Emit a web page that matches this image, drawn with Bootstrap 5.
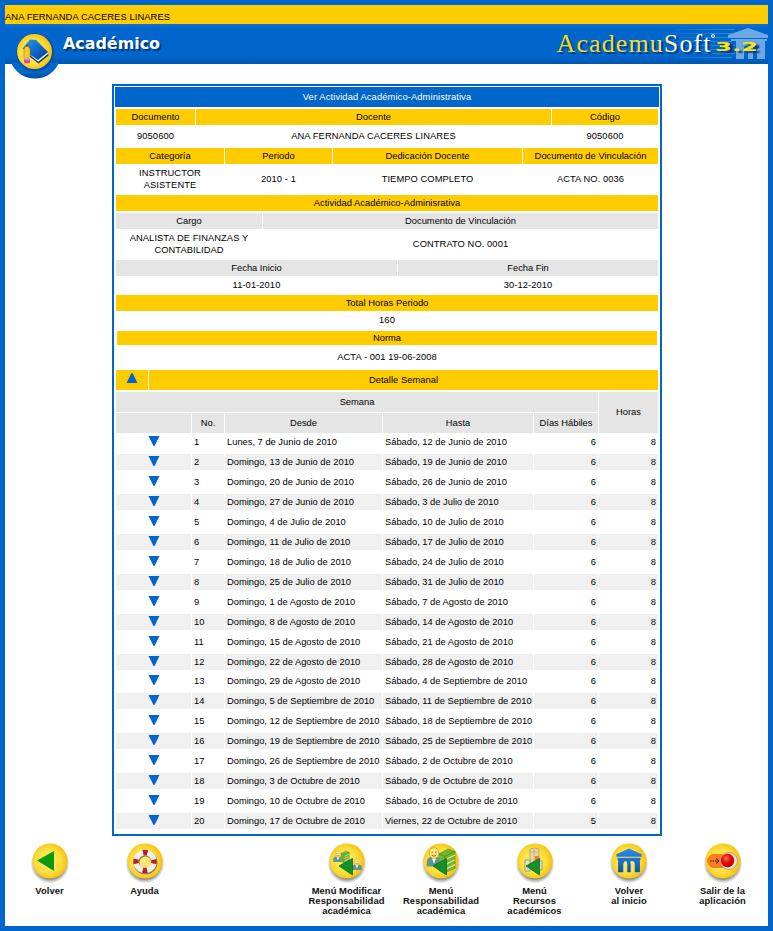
<!DOCTYPE html>
<html lang="es">
<head>
<meta charset="utf-8">
<meta name="viewport" content="width=device-width, initial-scale=1">
<title>Académico - AcademuSoft 3.2</title>
<link href="https://cdn.jsdelivr.net/npm/bootstrap@5.3.0/dist/css/bootstrap.min.css" rel="stylesheet">
<style>
  body { font-family: "Liberation Sans", Arial, sans-serif; font-size: 9.33px; line-height: 12px; color: #000; background: #fff; }
  .page { width: 773px; height: 931px; border: 5px solid #06c; }
  .userbar { height: 19px; background: #fc0; padding-top: 6px; letter-spacing: .1px; flex: none; }
  .banner { height: 40px; background: linear-gradient(#1470d0 0, #06c 5px, #06c 32px, #0057b0 40px); flex: none; }
  .banner svg { top: 0; left: 0; }
  .inked { text-shadow: 2px 1.5px 1px rgba(0, 40, 95, .75); }
  .sheet { width: 550px; height: 752px; margin-top: 20px; margin-left: 107px; border: 2px solid #06c; padding: 1px; flex: none; }
  .title { height: 20px; margin-bottom: 2px; background: #06c; color: #fff; letter-spacing: .12px; }
  .cells { display: grid; column-gap: 1px; margin: 0 1px; }
  .cells > div { display: flex; align-items: center; justify-content: center; text-align: center; }
  .vals > div { padding-bottom: 2px; letter-spacing: .08px; }
  .gold > div { background: #fc0; letter-spacing: .04px; }
  .grey > div { background: #e5e5e5; }
  .h14 { height: 14px; }
  .h16 { height: 16px; }
  .h19 { height: 19px; }
  .h20 { height: 20px; }
  .h23 { height: 23px; }
  .h25 { height: 25px; }
  .h31 { height: 31px; }
  .spaced { margin-top: 2px; }
  .c3 { grid-template-columns: 79px 355px 106px; }
  .c4 { grid-template-columns: 108px 107px 189px 135px; }
  .c2a { grid-template-columns: 146px 395px; }
  .c2b { grid-template-columns: 281px 260px; }
  .c2c { grid-template-columns: 32px 509px; }
  .c1 { grid-template-columns: 542px; }
  .inset { grid-template-columns: 540px; margin: 0 2px; }
  .wk { grid-template-columns: 75px 32px 157px 150px 64px 59px; }
  .wkhead { grid-template-rows: 20px 20px; row-gap: 1px; height: 41px; margin-top: 2px; margin-bottom: -1px; }
  .span5 { grid-column: 1 / 6; }
  .tall { grid-column: 6; grid-row: 1 / 3; }
  .wkhead > .tall { padding-bottom: 2px; }
  .wkrow { height: 20px; padding: 2px 0; white-space: nowrap; }
  .wkrow.short { height: 19px; padding: 1px 0 2px; }
  .wkrow > .l { justify-content: flex-start; padding-left: 2px; }
  .wkrow > .r { justify-content: flex-end; padding-right: 2px; }
  .wkrow.alt > div { background: #f0f0f0; }
  .tools { display: grid; grid-template-columns: 89px 101px 104px 95px 94px 93px 96px 91px; margin-top: 6px; }
  .tool { font-size: 9.4px; font-weight: bold; line-height: 10px; letter-spacing: .06px; text-align: center; color: #111; text-decoration: none; }
  .tool svg { display: block; margin: 0 auto 1px; }
  .tool .cap { padding-top: 1px; }
</style>
<script src="https://cdn.jsdelivr.net/npm/bootstrap@5.3.0/dist/js/bootstrap.bundle.min.js"></script>
</head>
<body>
<svg width="0" height="0" class="position-absolute">
  <defs>
    <radialGradient id="sun" cx=".45" cy=".5" r=".6"><stop offset="0" stop-color="#ffed80"/><stop offset=".6" stop-color="#fddd3a"/><stop offset="1" stop-color="#f2b800"/></radialGradient>
    <radialGradient id="ball" cx=".4" cy=".35" r=".65"><stop offset="0" stop-color="#ff6a50"/><stop offset=".5" stop-color="#e80c0c"/><stop offset="1" stop-color="#b80000"/></radialGradient>
    <radialGradient id="shade"><stop offset=".75" stop-color="#555" stop-opacity=".75"/><stop offset="1" stop-color="#777" stop-opacity="0"/></radialGradient>
    <linearGradient id="book" x1="0" y1="0" x2="1" y2="1"><stop offset="0" stop-color="#1fa0f4"/><stop offset="1" stop-color="#0038a0"/></linearGradient>
    <linearGradient id="arch" gradientUnits="userSpaceOnUse" x1="0" y1="-12" x2="0" y2="13"><stop offset="0" stop-color="#2a8cf0"/><stop offset="1" stop-color="#0a56a8"/></linearGradient>
    <g id="disc"><circle cx="20" cy="22" r="19.5" fill="url(#shade)"/><circle cx="20" cy="19" r="17.6" fill="url(#sun)"/></g>
    <g id="person"><path d="M-6 10v-3q0-4 4-4h4q4 0 4 4v3z" fill="#4687a5"/><path d="M-2 3L0 8l2-5z" fill="#fff"/><circle r="4" fill="#ffe985" stroke="#c99a2c" stroke-width=".6"/><path d="M-1.5-1v1M1.5-1v1M-2 1.5q2 2 4 0" stroke="#6c4a10" stroke-width=".7" fill="none"/></g>
    <g id="books"><path d="M0 4L8 0l6 2v14l-9 4-5-2z" fill="#5fae2c" stroke="#3a8a18" stroke-width=".5"/><path d="M0 4l5 2 9-4M5 6v14" fill="none" stroke="#2c7c12" stroke-width=".7"/><path d="M5.500 9l8.500-4M5.500 13l8.500-4M5.500 17l8.500-4" stroke="#d8e9a8" stroke-width="1"/></g>
    <g id="portal"><path d="M-11-6L0-12 11-6v2.500h-22z"/><path d="M-10-2.500H10V0H9.500V13H5V4q-.3-3-2.500-3T1.500 4v9h-3V4q0-3-1.500-3T-5 4v9h-4.500V0h-.5z"/></g>
    <path id="back" d="M12 24L25.500 16.500V33z" fill="#12902a" stroke="#0a6a1a" stroke-width=".8"/>
  </defs>
</svg>

<div class="page d-flex flex-column overflow-hidden">
  <div class="userbar">ANA FERNANDA CACERES LINARES</div>
  <header class="banner position-relative">
    <svg class="position-absolute" width="763" height="58" viewBox="5 24 763 58">
      <defs>
        <linearGradient id="dip" x1="0" y1="0" x2="0" y2="1"><stop offset=".6" stop-color="#06c"/><stop offset="1" stop-color="#00489a"/></linearGradient>
        <linearGradient id="gt" gradientUnits="userSpaceOnUse" x1="556" y1="0" x2="715" y2="0"><stop offset="0" stop-color="#f8d818"/><stop offset=".6" stop-color="#f0dc40"/><stop offset=".8" stop-color="#fff"/></linearGradient>
        <linearGradient id="fade"><stop offset="0" stop-color="#5ba0e0" stop-opacity="0"/><stop offset="1" stop-color="#5ba0e0"/></linearGradient>
      </defs>
      <path d="M11 62.500H59A26 26 0 0 1 11 62.500z" fill="url(#dip)"/>
      <circle cx="35" cy="52.500" r="19" fill="#0053ac"/>
      <circle cx="34.500" cy="51.500" r="17.500" fill="url(#sun)"/>
      <path d="M24 52l14.500 11.500 10-8-.5-3-10 8L25 49z" fill="#06307a"/>
      <path d="M26 52l12.300 9.800L48 54v-1.500L38 60z" fill="#fff"/>
      <path d="M22.500 48.500L30 39.500l6 .5 12 12-10 8z" fill="url(#book)"/>
      <path d="M24 49L27 44.500 30 49v9h-6z" fill="#ffc928" stroke="#a86b00" stroke-width=".5"/><path d="M26 46l1-1.500L28 46v.5h-2z" fill="#222"/><path d="M24 57.500h6v2h-6z" fill="#bbb"/><path d="M24 59.500h6v3q-3 1.500-6 0z" fill="#e83cc0"/>
      <text class="inked" x="63" y="49.200" font-family="'DejaVu Sans',Verdana,sans-serif" font-weight="bold" font-size="16" textLength="97" lengthAdjust="spacingAndGlyphs" fill="#fff">Académico</text>
      <path d="M675 29h60v1h-60zM670 33h65v1h-65zM680 37h52v1h-52zM660 41h72v1h-72zM670 45h65v1h-65zM680 49h55v1h-55zM670 53h65v1h-65zM680 57h52v1h-52z" fill="url(#fade)" opacity=".6"/>
      <path d="M728 35l20-7 20 7v3h-40zM731 39h36v2h-2v18h-8V47q-1.500-3-4 0v12h-5V47q-2.500-3-4 0v12h-8V41h-5z" fill="#6ca9e4"/>
      <text class="inked" x="556.500" y="52" font-family="'Liberation Serif',serif" font-size="26" textLength="154" lengthAdjust="spacing" fill="url(#gt)">AcademuSoft</text>
      <circle cx="713" cy="36" r="1.500" fill="none" stroke="#fff"/>
      <text class="inked" x="715" y="51" font-family="'DejaVu Sans',sans-serif" font-weight="bold" font-size="12.500" textLength="43" lengthAdjust="spacingAndGlyphs" fill="#ffe600">3.2</text>
    </svg>
  </header>

  <main class="sheet">
    <div class="title d-flex align-items-center justify-content-center">Ver Actividad Académico-Administrativa</div>
    <div class="cells gold h16 c3"><div>Documento</div><div>Docente</div><div>Código</div></div>
    <div class="cells vals h23 c3"><div>9050600</div><div>ANA FERNANDA CACERES LINARES</div><div>9050600</div></div>
    <div class="cells gold h16 c4"><div>Categoría</div><div>Periodo</div><div>Dedicación Docente</div><div>Documento de Vinculación</div></div>
    <div class="cells vals h31 c4"><div>INSTRUCTOR<br>ASISTENTE</div><div>2010 - 1</div><div>TIEMPO COMPLETO</div><div>ACTA NO. 0036</div></div>
    <div class="cells gold h16 c1"><div>Actividad Académico-Adminisrativa</div></div>
    <div class="cells grey h16 c2a spaced"><div>Cargo</div><div>Documento de Vinculación</div></div>
    <div class="cells vals h31 c2a"><div>ANALISTA DE FINANZAS Y<br>CONTABILIDAD</div><div>CONTRATO NO. 0001</div></div>
    <div class="cells grey h16 c2b"><div>Fecha Inicio</div><div>Fecha Fin</div></div>
    <div class="cells vals h19 c2b"><div>11-01-2010</div><div>30-12-2010</div></div>
    <div class="cells gold h16 c1"><div>Total Horas Periodo</div></div>
    <div class="cells vals h20 c1"><div>160</div></div>
    <div class="cells gold h14 inset"><div>Norma</div></div>
    <div class="cells vals h25 c1"><div>ACTA - 001 19-06-2008</div></div>
    <div class="cells gold h20 c2c"><div><svg width="12" height="14" viewBox="0 0 12 14"><path d="M5.500 0h1L11.500 10H.5z" fill="#06c"/></svg></div><div>Detalle Semanal</div></div>
    <div class="cells grey wk wkhead"><div class="span5">Semana</div><div class="tall">Horas</div><div></div><div>No.</div><div>Desde</div><div>Hasta</div><div>Días Hábiles</div></div>
    <div id="weeks"></div>
  </main>

  <nav class="tools">
    <a class="tool"><svg width="40" height="42"><use href="#disc"/><path d="M7 18.500L24 9v20z" fill="#0b9a0b"/></svg><div class="cap">Volver</div></a>
    <a class="tool"><svg width="40" height="42"><use href="#disc"/><circle cx="20.500" cy="20.500" r="9" fill="none" stroke="#8a7a50" stroke-width="6"/><circle cx="20" cy="19.500" r="9" fill="none" stroke="#eee" stroke-width="5.500"/><circle cx="20" cy="19.500" r="9" fill="none" stroke="#b8202a" stroke-width="5.500" stroke-dasharray="4.500 9.637" stroke-dashoffset="2.250"/></svg><div class="cap">Ayuda</div></a>
    <span></span>
    <a class="tool"><svg width="40" height="42"><use href="#disc"/><g opacity=".85"><g transform="translate(11 12) scale(.8)"><use href="#person"/></g><g transform="translate(14 9) scale(.6)"><use href="#books"/></g><g transform="translate(30 20) scale(.8)"><use href="#person"/></g></g><use href="#back"/></svg><div class="cap">Menú Modificar<br>Responsabilidad<br>académica</div></a>
    <a class="tool"><svg width="40" height="42"><use href="#disc"/><g opacity=".85"><g transform="translate(13 11) scale(1.200 1.350)"><use href="#person"/></g><g transform="translate(18 7) scale(1.150 1.200)"><use href="#books"/></g></g><use href="#back"/></svg><div class="cap">Menú<br>Responsabilidad<br>académica</div></a>
    <a class="tool"><svg width="40" height="42"><use href="#disc"/><path d="M15 7l5-1 4 1v20h-9z" fill="#e8d99a" stroke="#a8966a" stroke-width=".7"/><path d="M15 10h8M19 7v15" stroke="#b8a67a" stroke-width=".7"/><path d="M10 18h5v11h-5zM23 19h4v9h-4z" fill="#e9e3c4" stroke="#7d8578" stroke-width=".7"/><path d="M20 14h4v4h-4z" fill="#ef7a38"/><use href="#back" x="-1"/></svg><div class="cap">Menú<br>Recursos<br>académicos</div></a>
    <a class="tool"><svg width="40" height="42"><use href="#disc"/><g transform="translate(20 18)" fill="url(#arch)"><use href="#portal" transform="scale(1.150 .95)"/></g></svg><div class="cap">Volver<br>al inicio</div></a>
    <a class="tool"><svg width="40" height="42"><use href="#disc"/><path d="M11 12.500h14v13H11a6.500 6.500 0 0 1 0-13z" fill="#ff7b20" stroke="#e55c10" stroke-width=".6"/><circle cx="26" cy="19" r="8.500" fill="#e5dfcd" stroke="#a99a74" stroke-width=".8"/><circle cx="24.500" cy="18.500" r="6.700" fill="url(#ball)"/><path d="M7 19h8" stroke="#220" stroke-dasharray="1.500 1"/><path d="M13 16.500l3 2.500-3 2.500" stroke="#220" fill="none"/></svg><div class="cap">Salir de la<br>aplicación</div></a>
  </nav>
</div>
<script>
  const weeks = [
    ["Lunes, 7 de Junio", "Sábado, 12 de Junio"], ["Domingo, 13 de Junio", "Sábado, 19 de Junio"],
    ["Domingo, 20 de Junio", "Sábado, 26 de Junio"], ["Domingo, 27 de Junio", "Sábado, 3 de Julio"],
    ["Domingo, 4 de Julio", "Sábado, 10 de Julio"], ["Domingo, 11 de Julio", "Sábado, 17 de Julio"],
    ["Domingo, 18 de Julio", "Sábado, 24 de Julio"], ["Domingo, 25 de Julio", "Sábado, 31 de Julio"],
    ["Domingo, 1 de Agosto", "Sábado, 7 de Agosto"], ["Domingo, 8 de Agosto", "Sábado, 14 de Agosto"],
    ["Domingo, 15 de Agosto", "Sábado, 21 de Agosto"], ["Domingo, 22 de Agosto", "Sábado, 28 de Agosto"],
    ["Domingo, 29 de Agosto", "Sábado, 4 de Septiembre"], ["Domingo, 5 de Septiembre", "Sábado, 11 de Septiembre"],
    ["Domingo, 12 de Septiembre", "Sábado, 18 de Septiembre"], ["Domingo, 19 de Septiembre", "Sábado, 25 de Septiembre"],
    ["Domingo, 26 de Septiembre", "Sábado, 2 de Octubre"], ["Domingo, 3 de Octubre", "Sábado, 9 de Octubre"],
    ["Domingo, 10 de Octubre", "Sábado, 16 de Octubre"], ["Domingo, 17 de Octubre", "Viernes, 22 de Octubre"]
  ];
  document.getElementById("weeks").innerHTML = weeks.map(([from, to], i) => `
    <div class="cells wk wkrow ${i % 2 ? "alt" : ""} ${i === 12 ? "short" : ""}">
      <div><svg width="12" height="12" viewBox="0 0 12 12"><path d="M.5 0h11L6.500 10h-1z" fill="#06c"/></svg></div>
      <div class="l">${i + 1}</div><div class="l">${from} de 2010</div><div class="l">${to} de 2010</div>
      <div class="r">${i === 19 ? 5 : 6}</div><div class="r">8</div>
    </div>`).join("");
</script>
</body>
</html>
